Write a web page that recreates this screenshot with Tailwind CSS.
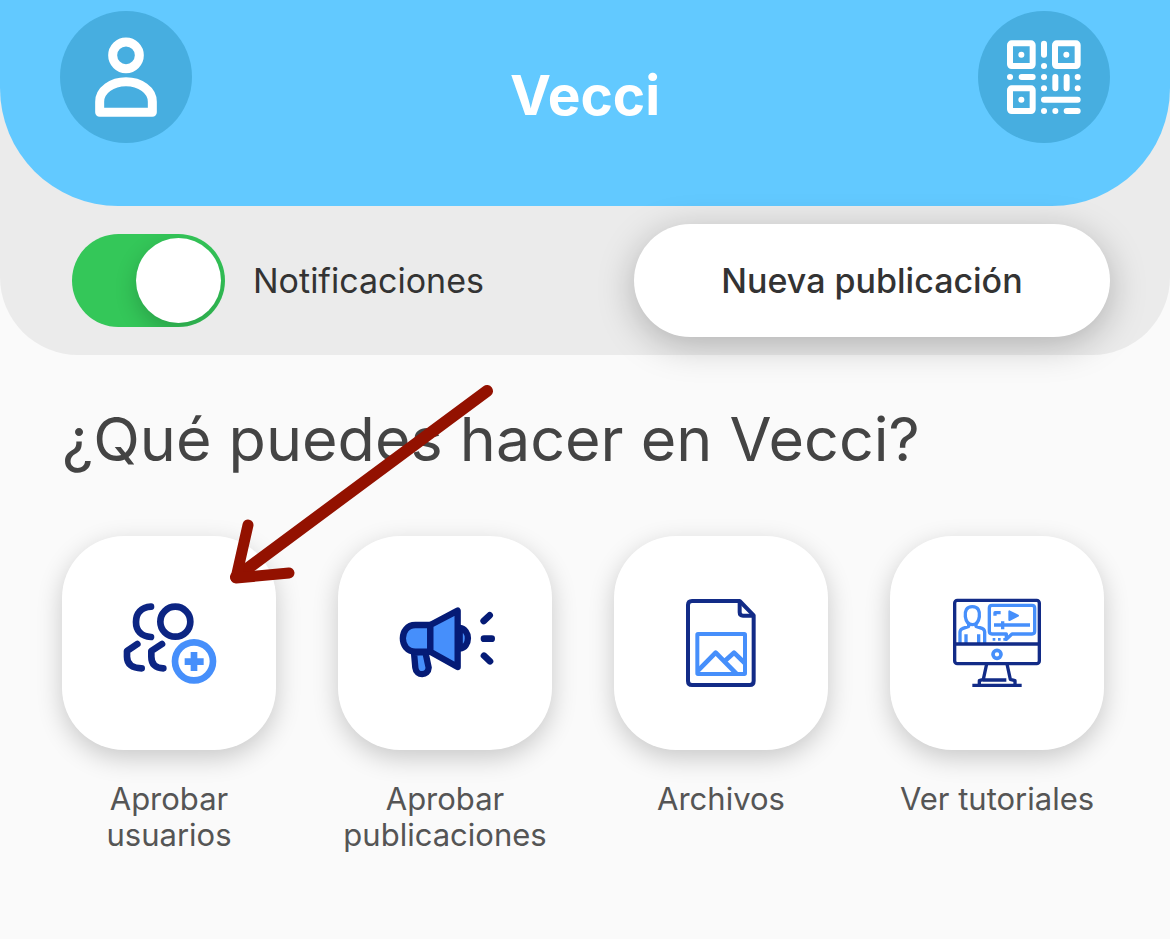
<!DOCTYPE html>
<html lang="es">
<head>
<meta charset="utf-8">
<meta name="viewport" content="width=device-width, initial-scale=1">
<title>Vecci</title>
<script src="https://cdn.jsdelivr.net/npm/@tailwindcss/browser@4"></script>
</head>
<body class="relative min-h-screen overflow-x-hidden bg-[#fafafa] font-['Inter',sans-serif]">

<div class="rounded-b-[78px] bg-[#ebebeb]">
  <header class="flex items-start justify-between rounded-b-[118px] bg-[#62c9ff] px-[60px] pt-[11px] pb-[27px]">
    <button type="button" aria-label="Perfil" class="size-[132px] rounded-full bg-[#47aee0]">
      <svg viewBox="30 33 396 396" class="size-full" fill="none" stroke="#fff" stroke-width="27" stroke-linejoin="round" aria-hidden="true">
        <circle cx="228" cy="166" r="40"/>
        <path d="M149 337V305C149 270 186 245 228 245S307 270 307 305V337Z"/>
      </svg>
    </button>
    <h1 class="text-[55px] leading-[168px] font-bold text-white">Vecci</h1>
    <button type="button" aria-label="Código QR" class="size-[132px] rounded-full bg-[#47aee0]">
      <svg viewBox="24 33 396 396" class="size-full" fill="none" stroke="#fff" stroke-width="18" stroke-linecap="round" aria-hidden="true">
        <rect x="120" y="130" width="68" height="68" rx="5"/>
        <rect x="255" y="130" width="68" height="68" rx="5"/>
        <rect x="120" y="265" width="68" height="68" rx="5"/>
        <path d="M154 164h.1M289 164h.1M154 299h.1M222 131v33M222 198h.1M222 231h.1M222 265h.1M120 231h.1M155 231h33M256 231v34M290 231v34M323 231h.1M323 265h.1M222 299h101M222 333h.1M256 333h.1M290 333h33"/>
      </svg>
    </button>
  </header>

  <div class="flex items-center justify-between py-[18px] pr-[60px] pl-[72px]">
    <label class="flex items-center gap-7 text-[34px] leading-10 text-[#333]">
      <input type="checkbox" role="switch" checked class="flex h-[93px] w-[153px] appearance-none items-center overflow-hidden rounded-full bg-[#34c759] px-1 before:size-[85px] before:rounded-full before:bg-white before:shadow-[0_8px_22px_rgba(0,0,0,0.2)] checked:justify-end">
      Notificaciones
    </label>
    <button type="button" class="relative h-[113px] w-[476px] rounded-full bg-white text-[34px] leading-10 font-medium text-[#333] shadow-[0_8px_36px_rgba(0,0,0,0.25)]">Nueva publicación</button>
  </div>
</div>

<main class="pt-12 pr-[66px] pl-[62px]">
  <h2 class="text-[61px] leading-[72px] text-[#444]">¿Qué puedes hacer en Vecci?</h2>

  <nav class="mt-[61px] grid grid-cols-4 gap-[62px] text-center text-[31px] leading-9 text-[#555]">
    <a href="#usuarios" class="flex flex-col items-center gap-[31px]">
      <span class="aspect-square w-full rounded-[62px] bg-white shadow-[0_8px_26px_rgba(0,0,0,0.2)]">
        <svg viewBox="-144 -162 642 642" class="size-full" fill="none" stroke="#0c2583" stroke-width="20" stroke-linecap="round" stroke-linejoin="round" aria-hidden="true">
          <circle cx="196" cy="95" r="45"/>
          <path d="M123 50C93 52 78 70 78 96S93 139 123 141M82 162L51 183V200C51 222 66 235 95 235M156 162L124 183V200C124 222 136 235 160 235"/>
          <circle cx="252" cy="214" r="67" fill="#fff" stroke="none"/>
          <circle cx="252" cy="214" r="57" stroke="#468ffb"/>
          <path d="M252 186v57M224 215h57" stroke="#468ffb" stroke-linecap="butt"/>
        </svg>
      </span>
      <span>Aprobar usuarios</span>
    </a>
    <a href="#publicaciones" class="flex flex-col items-center gap-[31px]">
      <span class="aspect-square w-full rounded-[62px] bg-white shadow-[0_8px_26px_rgba(0,0,0,0.2)]">
        <svg viewBox="-144 -162 642 642" class="size-full" fill="#468ffb" stroke="#051b76" stroke-width="19" stroke-linecap="round" stroke-linejoin="round" aria-hidden="true">
          <path d="M221 114C254 118 254 172 221 176Z"/>
          <path d="M84 188L88 233C91 260 127 258 128 233L118 186Z"/>
          <path d="M133 105H88C38 105 38 185 88 185H133Z"/>
          <path d="M133 105L215 62V231L133 185Z"/>
          <path d="M293 93L311 76M294 146H317M294 197L312 214" stroke-width="20"/>
        </svg>
      </span>
      <span class="-mx-4">Aprobar<br>publicaciones</span>
    </a>
    <a href="#archivos" class="flex flex-col items-center gap-[31px]">
      <span class="aspect-square w-full rounded-[62px] bg-white shadow-[0_8px_26px_rgba(0,0,0,0.2)]">
        <svg viewBox="-168 -147 642 642" class="size-full" fill="none" stroke="#122b87" stroke-width="12" stroke-linejoin="round" aria-hidden="true">
          <path d="M66 48H209L251 91V288Q251 300 239 300H66Q54 300 54 288V60Q54 48 66 48Z"/>
          <path d="M209 49V82Q209 92 219 92H250"/>
          <g stroke="#468ffb">
            <rect x="82" y="147" width="143" height="120" rx="2"/>
            <path d="M84 257L137 203L199 266M167 226L192 203L224 234" stroke-width="14"/>
          </g>
        </svg>
      </span>
      <span>Archivos</span>
    </a>
    <a href="#tutoriales" class="flex flex-col items-center gap-[31px]">
      <span class="aspect-square w-full rounded-[62px] bg-white shadow-[0_8px_26px_rgba(0,0,0,0.2)]">
        <svg viewBox="-150 -162 642 642" class="size-full" fill="none" stroke="#122b87" stroke-width="10" stroke-linejoin="round" aria-hidden="true">
          <g stroke="#468ffb">
            <path d="M97 50C79 50 74 63 76 80C78 95 86 104 97 104S116 95 118 80C120 63 115 50 97 50Z"/>
            <path d="M86 101V109L67 116Q60 119 60 127V160M108 101V109L128 116Q134 119 134 127V160M78 133V160M116 133V160"/>
            <path d="M156 46H276Q284 46 284 54V124Q284 132 276 132H216L199 148V132H156Q148 132 148 124V54Q148 46 156 46Z"/>
            <path d="M165 77V68H182M162 105H270M188 94V118"/>
            <path d="M208 64V90L234 77Z" fill="#468ffb" stroke-width="6"/>
            <path d="M158 148h8M174 148h8M190 148h8" stroke-width="8"/>
            <circle cx="171" cy="193" r="12" stroke-width="11"/>
          </g>
          <rect x="44" y="31" width="254" height="190" rx="8"/>
          <path d="M44 162H298M140 222L130 268L118 272V284M201 222L211 268L225 272V284M128 270H199"/>
          <path d="M97 286H245"/>
        </svg>
      </span>
      <span class="-mx-4">Ver tutoriales</span>
    </a>
  </nav>
</main>

<!-- Arrow pointing at the first card -->
<svg class="pointer-events-none absolute top-[370px] left-[200px] h-[240px] w-[320px]" viewBox="200 370 320 240" fill="none" stroke="#931100" stroke-linecap="round" stroke-linejoin="round" aria-hidden="true">
  <path d="M487 391L236 577" stroke-width="12"/>
  <path d="M248 525L236 578L289 573" stroke-width="11"/>
</svg>
</body>
</html>
